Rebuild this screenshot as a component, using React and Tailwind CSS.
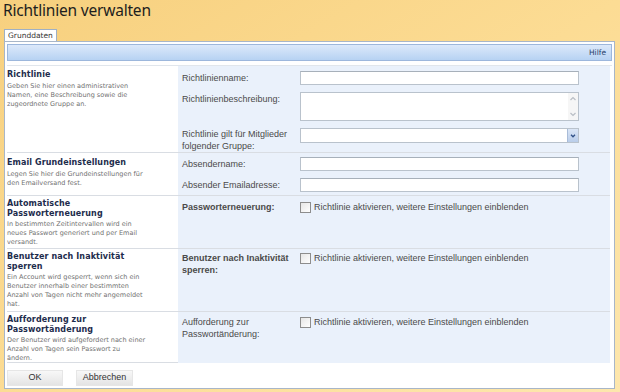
import React from 'react';

const sans = "font-['Liberation_Sans',Arial,sans-serif]";
const verd = "font-['DejaVu_Sans',Verdana,sans-serif]";

const Input = () => (
  <div className="w-[279px] h-[14px] bg-white border border-[#b9c2cc] border-t-[#a7b0ba]" />
);

const Checkbox = () => (
  <div className="w-[11px] h-[11px] border border-[#8d8d8d] bg-gradient-to-br from-[#e6e6e6] to-white shrink-0" />
);

const Info = ({ title, top, children }) => (
  <div className={`pr-2 ${top}`}>
    <div className={`${verd} font-bold text-[8px] leading-[9.5px] text-[#1d2c4c] tracking-[0.1px]`}>{title}</div>
    <div className={`${verd} text-[6.5px] leading-[9px] text-[#707070] mt-[2px]`}>{children}</div>
  </div>
);

const Row = ({ h, info, children }) => (
  <div className={`grid grid-cols-[171px_1fr] border-b border-[#d9dde3] ${h}`}>
    {info}
    <div className="bg-[#eaf1fb] pl-[4px]">{children}</div>
  </div>
);

const Label = ({ bold, children, cls = '' }) => (
  <div className={`${sans} text-[9px] leading-[12px] text-[#4a4a4a] w-[118px] ${bold ? 'font-bold text-[#3a3f4a]' : ''} ${cls}`}>{children}</div>
);

const ActivateRow = ({ label, bold, top }) => (
  <div className={`flex items-start ${top}`}>
    <Label bold={bold}>{label}</Label>
    <div className="flex items-center gap-[3px] mt-[1px]">
      <Checkbox />
      <span className={`${sans} text-[9px] text-[#4a4a4a] leading-[11px]`}>Richtlinie aktivieren, weitere Einstellungen einblenden</span>
    </div>
  </div>
);

export default function App() {
  return (
    <div className="w-[620px] h-[392px] overflow-hidden bg-gradient-to-br from-[#f7d07e] via-[#fcdc94] to-[#fde7ad]">
      <h1 className="font-['Noto_Sans',sans-serif] text-[15.5px] leading-[20px] tracking-[-0.2px] text-[#1e1e1e] pl-[3px] h-[21px]">Richtlinien verwalten</h1>
      <div className="flex pl-[4px] mt-[8px] h-[12px]">
        <div className={`${verd} bg-white border border-[#9fb0c4] border-b-0 px-[3px] h-[12px] text-[7.5px] leading-[11px] text-[#333]`}>Grunddaten</div>
      </div>
      <div className="mx-[4px] w-[611px] bg-white border border-[#a8b6c8] p-[2px] pb-0">
        <div className="h-[17px] bg-gradient-to-b from-[#dce9fa] to-[#b7d2f3] border border-[#9db7dc] flex items-center justify-end pr-[5px]">
          <span className={`${verd} text-[7.5px] text-[#27406a]`}>Hilfe</span>
        </div>
        <div className="h-[5px] border-b border-[#e1e6ec]" />
        <div className="mr-[2px]">
          <Row
            h="h-[87px]"
            info={
              <Info title="Richtlinie" top="pt-[4px]">
                Geben Sie hier einen administrativen<br />Namen, eine Beschreibung sowie die<br />zugeordnete Gruppe an.
              </Info>
            }
          >
            <div className="flex items-start pt-[5px]">
              <Label cls="pt-[1px]">Richtlinienname:</Label>
              <Input />
            </div>
            <div className="flex items-start mt-[7px]">
              <Label cls="pt-[1px]">Richtlinienbeschreibung:</Label>
              <div className="w-[279px] h-[29px] bg-white border border-[#b9c2cc] flex justify-end">
                <div className="w-[10px] flex flex-col justify-between py-[1px] bg-[#f6f6f6]">
                  <svg viewBox="0 0 10 10" className="w-[10px] h-[10px]"><path d="M2.5 6 L5 3.5 L7.5 6" stroke="#b9bec5" strokeWidth="1.2" fill="none" /></svg>
                  <svg viewBox="0 0 10 10" className="w-[10px] h-[10px]"><path d="M2.5 4 L5 6.5 L7.5 4" stroke="#b9bec5" strokeWidth="1.2" fill="none" /></svg>
                </div>
              </div>
            </div>
            <div className="flex items-start mt-[7px]">
              <Label cls="pt-[0px] leading-[11px]">Richtlinie gilt für Mitglieder folgender Gruppe:</Label>
              <div className="w-[279px] h-[15px] bg-white border border-[#b9c2cc] flex justify-end">
                <div className="w-[11px] h-full bg-gradient-to-b from-[#dbe6f6] to-[#b9cdea] border-l border-[#a9bcd8] flex items-center justify-center">
                  <svg viewBox="0 0 10 10" className="w-[8px] h-[8px]"><path d="M2.5 3.5 L5 6 L7.5 3.5" stroke="#2f4f86" strokeWidth="1.6" fill="none" /></svg>
                </div>
              </div>
            </div>
          </Row>
          <Row
            h="h-[43px]"
            info={
              <Info title="Email Grundeinstellungen" top="pt-[5px]">
                Legen Sie hier die Grundeinstellungen für<br />den Emailversand fest.
              </Info>
            }
          >
            <div className="flex items-start pt-[4px]">
              <Label cls="pt-[1px]">Absendername:</Label>
              <Input />
            </div>
            <div className="flex items-start mt-[7px]">
              <Label cls="pt-[1px]">Absender Emailadresse:</Label>
              <Input />
            </div>
          </Row>
          <Row
            h="h-[53px]"
            info={
              <Info title={<>Automatische<br />Passworterneuerung</>} top="pt-[3px]">
                In bestimmten Zeitintervallen wird ein<br />neues Passwort generiert und per Email<br />versandt.
              </Info>
            }
          >
            <ActivateRow label="Passworterneuerung:" bold top="pt-[5px]" />
          </Row>
          <Row
            h="h-[63px]"
            info={
              <Info title={<>Benutzer nach Inaktivität<br />sperren</>} top="pt-[3px]">
                Ein Account wird gesperrt, wenn sich ein<br />Benutzer innerhalb einer bestimmten<br />Anzahl von Tagen nicht mehr angemeldet<br />hat.
              </Info>
            }
          >
            <ActivateRow label={<>Benutzer nach Inaktivität<br />sperren:</>} bold top="pt-[3px]" />
          </Row>
          <Row
            h="h-[51px]"
            info={
              <Info title={<>Aufforderung zur<br />Passwortänderung</>} top="pt-[3px]">
                Der Benutzer wird aufgefordert nach einer<br />Anzahl von Tagen sein Passwort zu<br />ändern.
              </Info>
            }
          >
            <ActivateRow label={<>Aufforderung zur<br />Passwortänderung:</>} top="pt-[4px]" />
          </Row>
        </div>
        <div className="flex gap-[13px] pl-[0px] pt-[7px] h-[25px]">
          <button className={`${sans} w-[56px] h-[16px] text-[9px] text-[#333] bg-gradient-to-b from-[#f8f8f8] to-[#e4e4e4] border border-[#e6e6e6]`}>OK</button>
          <button className={`${sans} w-[57px] h-[16px] text-[9px] text-[#333] bg-gradient-to-b from-[#f8f8f8] to-[#e4e4e4] border border-[#e6e6e6]`}>Abbrechen</button>
        </div>
      </div>
    </div>
  );
}
